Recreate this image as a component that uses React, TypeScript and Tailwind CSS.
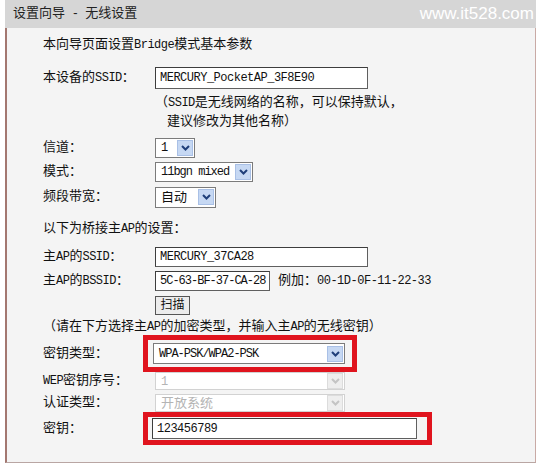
import { ReactNode } from "react";

// split text into ascii / cjk runs, ascii gets a narrower mono look like SimSun halfwidth
const mix = (s: string, tight?: boolean) =>
  s.split(/([\x20-\x7E]+)/).map((part, i) =>
    /^[\x20-\x7E]+$/.test(part) ? (
      <span
        key={i}
        className={tight ? "text-[12px] tracking-[-1px]" : "text-[12px] tracking-[-0.5px]"}
      >
        {part}
      </span>
    ) : (
      part
    )
  );

const Chevron = ({ disabled }: { disabled?: boolean }) => (
  <svg width="9" height="6" viewBox="0 0 9 6">
    <path
      d="M1 1 L4.5 4.5 L8 1"
      fill="none"
      stroke={disabled ? "#c4c4c4" : "#1f3f7a"}
      strokeWidth="2"
    />
  </svg>
);

const Select = ({
  value,
  width,
  disabled,
}: {
  value: string;
  width: string;
  disabled?: boolean;
}) => (
  <div
    className={`${width} h-full flex items-center border ${
      disabled ? "border-[#d2d2d2] text-[#b4b4b4]" : "border-[#7b7b7b] text-[#111]"
    } bg-white`}
  >
    <div className="flex-1 pl-[5px] whitespace-nowrap leading-none overflow-hidden">{mix(value, true)}</div>
    <div
      className={`w-[16px] h-[16px] mr-[1px] shrink-0 flex items-center justify-center ${
        disabled ? "bg-[#eeeeee] border border-[#dcdcdc]" : "bg-[#c6d8f3] border border-[#a9c0e6]"
      }`}
    >
      <Chevron disabled={disabled} />
    </div>
  </div>
);

const TextBox = ({ value, width, tight }: { value: string; width: string; tight?: boolean }) => (
  <div
    className={`${width} h-full flex items-center border border-[#5f5f5f] border-t-[#3d3d3d] border-l-[#3d3d3d] bg-white pl-[4px] text-[12px] ${
      tight ? "tracking-[-1px]" : "tracking-[-0.5px]"
    } text-[#111] whitespace-nowrap overflow-hidden`}
  >
    {value}
  </div>
);

const Row = ({
  label,
  h,
  mt,
  labelW = "w-[112px]",
  children,
}: {
  label?: string;
  h: string;
  mt?: string;
  labelW?: string;
  children?: ReactNode;
}) => (
  <div className={`flex items-center ${h} ${mt ?? ""}`}>
    <div className={`${labelW} shrink-0 whitespace-nowrap`}>{label ? mix(label) : null}</div>
    {children}
  </div>
);

export default function App() {
  return (
    <div
      className="w-[540px] h-[467px] bg-white text-[13px] text-[#111] overflow-hidden"
      style={{ fontFamily: '"Liberation Mono", "Noto Sans CJK SC", monospace' }}
    >
      <div className="ml-[5px] w-[531px] h-[28px] bg-[#d6d6d6] flex items-center justify-between pl-[8px] pr-[2px]">
        <span className="text-[#222]">{mix("设置向导 - 无线设置")}</span>
        <span className="text-white text-[17px] font-['Liberation_Sans',sans-serif]">www.it528.com</span>
      </div>

      <div className="ml-[5px] w-[531px] h-[435px] border-l-2 border-r border-b border-l-[#a37770] border-r-[#c9aaa5] border-b-[#b9a6a3] bg-[#f4f4f4] pl-[36px] flex flex-col">
        <div className="h-[24px] mt-[5px] flex items-center whitespace-nowrap">
          {mix("本向导页面设置Bridge模式基本参数")}
        </div>

        <Row label="本设备的SSID：" h="h-[22px]" mt="mt-[10px]">
          <TextBox value="MERCURY_PocketAP_3F8E90" width="w-[213px]" />
        </Row>
        <div className="h-[20px] mt-[4px] flex items-center pl-[112px] whitespace-nowrap">
          {mix("（SSID是无线网络的名称，可以保持默认，")}
        </div>
        <div className="h-[18px] flex items-center pl-[124px] whitespace-nowrap">
          建议修改为其他名称）
        </div>

        <Row label="信道：" h="h-[21px]" mt="mt-[6px]">
          <div className="h-[20px]">
            <Select value="1" width="w-[40px]" />
          </div>
        </Row>
        <Row label="模式：" h="h-[21px]" mt="mt-[3px]">
          <div className="h-[20px]">
            <Select value="11bgn mixed" width="w-[98px]" />
          </div>
        </Row>
        <Row label="频段带宽：" h="h-[22px]" mt="mt-[4px]">
          <div className="h-[21px]">
            <Select value="自动" width="w-[61px]" />
          </div>
        </Row>

        <div className="h-[20px] mt-[11px] flex items-center whitespace-nowrap">
          {mix("以下为桥接主AP的设置：")}
        </div>

        <Row label="主AP的SSID：" h="h-[20px]" mt="mt-[8px]">
          <TextBox value="MERCURY_37CA28" width="w-[213px]" />
        </Row>
        <Row label="主AP的BSSID：" h="h-[20px]" mt="mt-[4px]">
          <TextBox value="5C-63-BF-37-CA-28" width="w-[115px]" tight />
          <span className="ml-[8px] whitespace-nowrap">{mix("例加：00-1D-0F-11-22-33")}</span>
        </Row>
        <Row h="h-[19px]" mt="mt-[5px]">
          <div className="w-[35px] h-full flex items-center justify-center border border-[#555] bg-[#ececec] text-[12px]">
            扫描
          </div>
        </Row>

        <div className="h-[17px] mt-[3px] flex items-center whitespace-nowrap">
          {mix("（请在下方选择主AP的加密类型，并输入主AP的无线密钥）")}
        </div>

        <Row label="密钥类型：" h="h-[37px]" labelW="w-[100px]">
          <div className="h-full border-[5px] border-[#e0141e] pl-[5px] pr-[7px] py-[3px]">
            <Select value="WPA-PSK/WPA2-PSK" width="w-[192px]" />
          </div>
        </Row>
        <Row label="WEP密钥序号：" h="h-[18px]">
          <Select value="1" width="w-[190px]" disabled />
        </Row>
        <Row label="认证类型：" h="h-[18px]" mt="mt-[4px]">
          <Select value="开放系统" width="w-[190px]" disabled />
        </Row>
        <Row label="密钥：" h="h-[33px]" labelW="w-[100px]">
          <div className="h-full border-[5px] border-[#e0141e] pl-[4px] pr-[10px] py-[1px]">
            <TextBox value="123456789" width="w-[265px]" />
          </div>
        </Row>
      </div>
    </div>
  );
}
